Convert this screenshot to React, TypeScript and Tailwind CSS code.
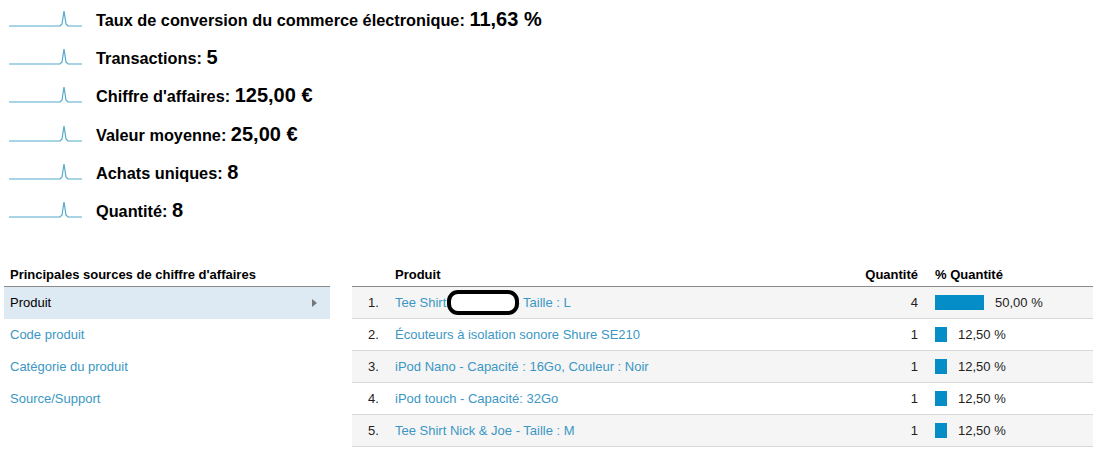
import React from "react";

const metrics = [
  { label: "Taux de conversion du commerce électronique:", value: "11,63 %" },
  { label: "Transactions:", value: "5" },
  { label: "Chiffre d'affaires:", value: "125,00 €" },
  { label: "Valeur moyenne:", value: "25,00 €" },
  { label: "Achats uniques:", value: "8" },
  { label: "Quantité:", value: "8" },
];

const rows = [
  { n: "1.", q: "4", pct: "50,00 %", w: 49 },
  { n: "2.", name: "Écouteurs à isolation sonore Shure SE210", q: "1", pct: "12,50 %", w: 12 },
  { n: "3.", name: "iPod Nano - Capacité : 16Go, Couleur : Noir", q: "1", pct: "12,50 %", w: 12 },
  { n: "4.", name: "iPod touch - Capacité: 32Go", q: "1", pct: "12,50 %", w: 12 },
  { n: "5.", name: "Tee Shirt Nick & Joe - Taille : M", q: "1", pct: "12,50 %", w: 12 },
];

function Spark() {
  return (
    <svg width="74" height="20" viewBox="0 0 74 20" className="shrink-0">
      <polyline
        points="0,17 51,17 53,15 55,2 57,15 59,17 73,17"
        fill="none"
        stroke="#55a9cc"
        strokeWidth="1.2"
      />
    </svg>
  );
}

export default function App() {
  return (
    <div className="w-[1103px] h-[453px] bg-white text-[#222] font-['Liberation_Sans',Arial,sans-serif]">
      <div className="flex flex-col pl-[9px] pt-0">
        {metrics.map((m) => (
          <div key={m.label} className="flex items-center h-[38.2px]">
            <Spark />
            <div className="ml-[13px] font-bold text-[16.3px] text-black leading-none whitespace-nowrap">
              {m.label} <span className="text-[20px]">{m.value}</span>
            </div>
          </div>
        ))}
      </div>

      <div className="flex mt-[35px] pl-[4px]">
        <div className="w-[326px]">
          <div className="h-[23px] border-b border-[#8a8a8a] pl-[6px] flex items-center font-bold text-[13px] text-black">
            Principales sources de chiffre d'affaires
          </div>
          <div className="h-[32px] bg-[#dde9f3] flex items-center justify-between pl-[6px] pr-[13px] text-[13px] text-black">
            <span>Produit</span>
            <span className="w-0 h-0 border-y-[4px] border-y-transparent border-l-[5px] border-l-[#777]" />
          </div>
          {["Code produit", "Catégorie du produit", "Source/Support"].map((t) => (
            <div key={t} className="h-[32px] flex items-center pl-[6px] text-[13px] text-[#3b97c4]">
              {t}
            </div>
          ))}
        </div>

        <div className="ml-[22px] w-[741px] text-[13px]">
          <div className="h-[23px] border-b border-[#8a8a8a] flex items-center font-bold text-black">
            <div className="w-[43px]" />
            <div className="flex-1">Produit</div>
            <div className="w-[80px] text-right">Quantité</div>
            <div className="w-[175px] pl-[17px]">% Quantité</div>
          </div>
          {rows.map((r, i) => (
            <div
              key={r.n}
              className={`h-[32px] border-b border-[#d8d8d8] flex items-center ${i % 2 === 0 ? "bg-[#f5f5f5]" : "bg-white"}`}
            >
              <div className="w-[43px] pl-[16px] text-[#222]">{r.n}</div>
              <div className="flex-1 text-[#3b97c4] flex items-center whitespace-nowrap">
                {r.name ? (
                  r.name
                ) : (
                  <>
                    <span>Tee Shirt</span>
                    <span className="inline-block w-[72px] h-[25px] border-[4px] border-black rounded-[11px] bg-white ml-[1px] -mr-[4px] relative z-10" />
                    <span>- Taille : L</span>
                  </>
                )}
              </div>
              <div className="w-[80px] text-right text-[#222]">{r.q}</div>
              <div className="w-[175px] pl-[17px] flex items-center text-[#222]">
                <div className="h-[15px] bg-[#058dc7]" style={{ width: r.w }} />
                <span className="ml-[11px]">{r.pct}</span>
              </div>
            </div>
          ))}
        </div>
      </div>
    </div>
  );
}
